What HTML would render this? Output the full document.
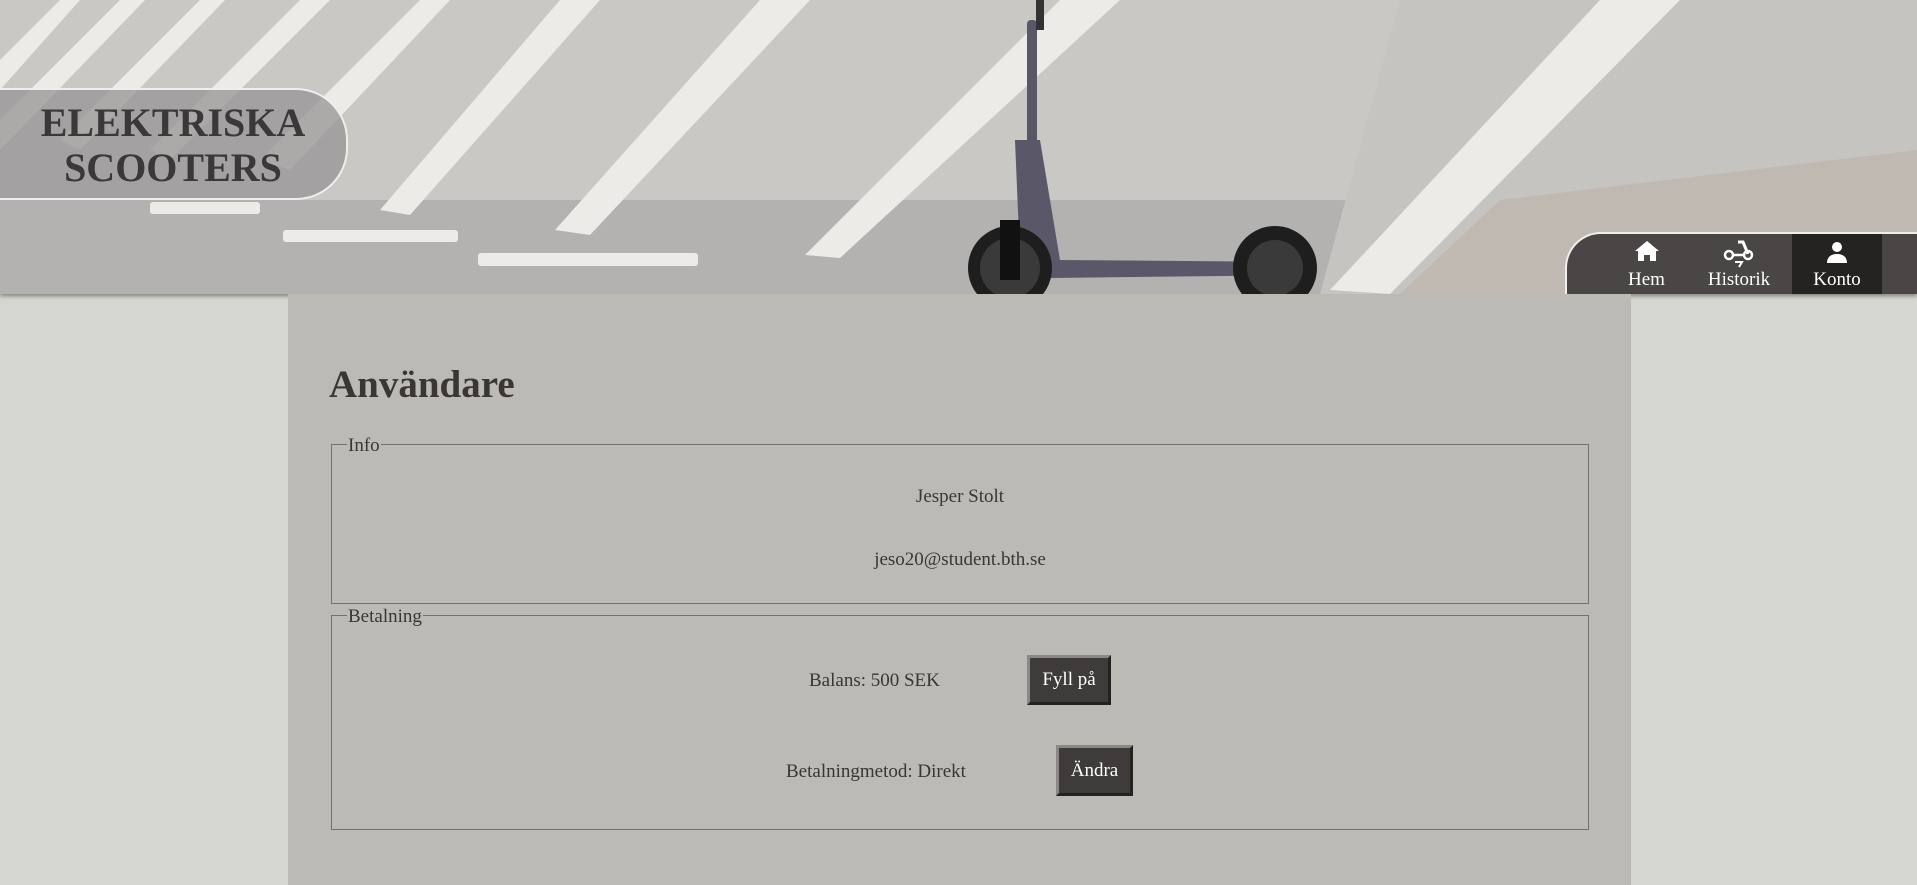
<!DOCTYPE html>
<html><head><meta charset="utf-8"><style>
html,body{margin:0;padding:0}
body{width:1917px;height:885px;overflow:hidden;background:#d6d6d0;position:relative;font-family:"Liberation Serif",serif;color:#3b3535}
.hdr{position:absolute;left:0;top:0;width:1917px;height:294px;overflow:hidden;box-shadow:0 2px 4px rgba(0,0,0,.4)}
.logo{position:absolute;left:0;top:88px;width:348px;height:112px;border:2px solid #eee;border-left:none;border-radius:0 52px 52px 0;background:rgba(150,148,148,.75);text-align:center;font-weight:bold;font-size:40px;line-height:45px;color:#3a3838;box-sizing:border-box;padding-top:10px}
.nav{position:absolute;left:1565px;top:232px;width:360px;height:64px;background:#4a4646;border:2px solid #eee;border-right:none;border-bottom:none;border-radius:36px 0 0 0;box-sizing:border-box}
.ni{position:absolute;top:0;height:62px;color:#fff;font-size:19px;text-align:center}
.ni span{position:absolute;bottom:5px;left:0;right:0}
.ni svg{position:absolute;top:6px;left:50%;transform:translateX(-50%)}
.main{position:absolute;left:288px;top:294px;width:1343px;height:591px;background:#bcbab5}
h1{position:absolute;left:329px;top:362px;margin:0;font-size:39px;font-weight:bold;color:#3b3535}
.fs{position:absolute;border:1px solid #727070;box-sizing:border-box}
.lg{position:absolute;top:-9px;left:15px;background:#bcbab5;font-size:19px;line-height:20px;padding:0 1px}
.t{position:absolute;font-size:19px;white-space:nowrap}
.btn{position:absolute;background:#3f3b3a;color:#fff;font-size:19px;border:3px solid;border-color:#8a8886 #222 #222 #8a8886;box-sizing:border-box;text-align:center}
</style></head><body>
<div class="hdr">
<svg width="1917" height="294" viewBox="0 0 1917 294" style="position:absolute;left:0;top:0">
<rect width="1917" height="294" fill="#c9c8c5"/>
<rect x="0" y="200" width="1917" height="94" fill="#b3b2b0"/>
<polygon points="1400,0 1917,0 1917,294 1320,294" fill="#c6c4c0"/>
<polygon points="1500,200 1917,150 1917,294 1400,294" fill="#bcb2a6" opacity=".6"/>
<g fill="#ecebe8">
<polygon points="0,60 60,0 80,0 0,90"/>
<polygon points="0,120 120,0 145,0 0,150"/>
<polygon points="60,140 200,0 225,0 80,150"/>
<polygon points="150,150 300,0 330,0 170,160"/>
<polygon points="260,160 420,0 450,0 290,170"/>
<polygon points="380,210 560,0 600,0 410,215"/>
<polygon points="555,230 760,0 810,0 590,235"/>
<polygon points="805,255 1060,0 1120,0 840,258"/>
<polygon points="1330,290 1600,0 1680,0 1390,294"/>
<rect x="150" y="202" width="110" height="12" rx="3"/>
<rect x="283" y="230" width="175" height="12" rx="3"/>
<rect x="478" y="253" width="220" height="13" rx="3"/>
</g>
<g fill="#5a5868">
<rect x="1027" y="20" width="10" height="220" rx="4"/>
<polygon points="1015,140 1040,140 1060,260 1310,262 1310,275 1050,278 1020,260"/>
</g>
<rect x="1036" y="0" width="8" height="30" fill="#333"/>
<circle cx="1010" cy="268" r="42" fill="#1e1e1e"/><circle cx="1010" cy="268" r="30" fill="#3a3a3a"/>
<circle cx="1275" cy="268" r="42" fill="#1e1e1e"/><circle cx="1275" cy="268" r="28" fill="#3a3a3a"/>
<rect x="1000" y="220" width="20" height="60" fill="#111"/>
</svg>
<div class="logo">ELEKTRISKA<br>SCOOTERS</div>
<div class="nav">
 <div class="ni" style="left:42px;width:75px"><svg width="26" height="22" viewBox="0 0 26 22"><path d="M13 1L1 11h3v10h6v-6h6v6h6V11h3z" fill="#fff"/></svg><span>Hem</span></div>
 <div class="ni" style="left:127px;width:90px"><svg width="34" height="28" viewBox="0 0 34 28"><path d="M16 2h5l5 12" stroke="#fff" stroke-width="3" fill="none"/><circle cx="7" cy="15" r="4" fill="none" stroke="#fff" stroke-width="2.5"/><circle cx="26" cy="15" r="4" fill="none" stroke="#fff" stroke-width="2.5"/><path d="M11 15h11" stroke="#fff" stroke-width="2.5"/><path d="M13 22h7l-3 5" stroke="#fff" stroke-width="2" fill="none"/></svg><span>Historik</span></div>
 <div class="ni" style="left:225px;width:90px;background:#252322"><svg width="24" height="24" viewBox="0 0 24 24"><circle cx="12" cy="7" r="5" fill="#fff"/><path d="M2 23c0-6 4-9 10-9s10 3 10 9z" fill="#fff"/></svg><span>Konto</span></div>
</div>
</div>
<div class="main"></div>
<h1>Användare</h1>
<div class="fs" style="left:331px;top:444px;width:1258px;height:160px"><div class="lg">Info</div></div>
<div class="t" style="left:0;width:1920px;text-align:center;top:486px">Jesper Stolt</div>
<div class="t" style="left:0;width:1920px;text-align:center;top:549px">jeso20@student.bth.se</div>
<div class="fs" style="left:331px;top:615px;width:1258px;height:215px"><div class="lg">Betalning</div></div>
<div class="t" style="left:809px;top:670px">Balans: 500 SEK</div>
<div class="btn" style="left:1027px;top:655px;width:84px;height:50px;line-height:44px">Fyll på</div>
<div class="t" style="left:786px;top:761px">Betalningmetod: Direkt</div>
<div class="btn" style="left:1056px;top:745px;width:77px;height:51px;line-height:45px">Ändra</div>
</body></html>
